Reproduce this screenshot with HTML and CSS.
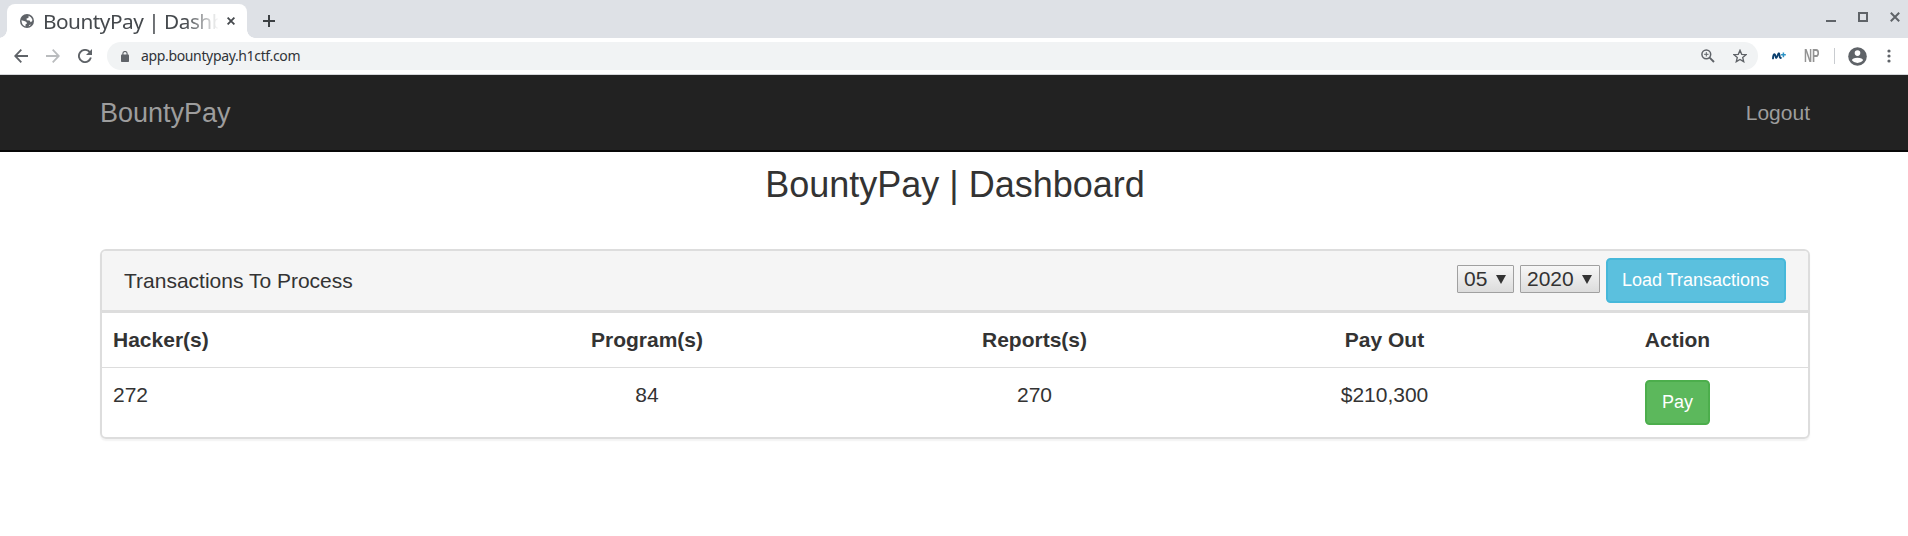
FILE: index.html
```html
<!DOCTYPE html>
<html lang="en">
<head>
<meta charset="utf-8">
<title>BountyPay | Dashboard</title>
<link rel="stylesheet" href="styles.css">
</head>
<body>
<div class="tabstrip">
  <div class="tab">
    <svg class="globe" width="14" height="14" viewBox="0 0 14 14"><circle cx="7" cy="7" r="7" fill="#5f6368"/><path d="M1.5 6.2 L5 7.3 Q6.8 7.8 7 9.4 L5.6 10.3 L5.4 12.4 Q1.4 11 1.5 6.2Z M8.7 1.8 Q11.3 2.9 12.2 5.3 L12.3 7 L10.7 8.2 L9.6 6.5 L6.8 6.2 L6.5 4.6 L8.4 4Z M8.6 12.2 L9.4 11 L11 10.4 Q10 11.8 8.6 12.2Z" fill="#fff"/></svg>
    <div class="tab-title">BountyPay | Dashb</div>
    <svg class="tab-close" width="8" height="8" viewBox="0 0 8 8"><path d="M.6 .6 7.4 7.4M7.4 .6 .6 7.4" stroke="#45494d" stroke-width="1.8"/></svg>
  </div>
  <svg class="newtab" width="12" height="12" viewBox="0 0 12 12"><path d="M6 0V12M0 6H12" stroke="#3c4043" stroke-width="2"/></svg>
  <div class="winbuttons">
    <svg width="10" height="10" viewBox="0 0 10 10"><path d="M0 9H10" stroke="#5f6368" stroke-width="2"/></svg>
    <svg width="10" height="10" viewBox="0 0 10 10"><rect x="1" y="1" width="8" height="8" fill="none" stroke="#5f6368" stroke-width="2"/></svg>
    <svg width="10" height="10" viewBox="0 0 10 10"><path d="M.8 .8 9.2 9.2M9.2 .8 .8 9.2" stroke="#5f6368" stroke-width="2"/></svg>
  </div>
</div>
<div class="toolbar">
  <div class="navicons">
    <svg width="14" height="14" viewBox="0 0 14 14" fill="none" stroke="#5f6368" stroke-width="1.8"><path d="M14 7H1.5M7.3 .7 1.2 7 7.3 13.3"/></svg>
    <svg width="14" height="14" viewBox="0 0 14 14" fill="none" stroke="#babcbe" stroke-width="1.8"><path d="M0 7H12.5M6.7 .7 12.8 7 6.7 13.3"/></svg>
    <svg width="14" height="14" viewBox="0 0 14 14"><path d="M11.8 3.2A6.1 6.1 0 1 0 12.9 8.6" fill="none" stroke="#5f6368" stroke-width="1.9"/><path d="M14 0V6H8Z" fill="#5f6368"/></svg>
  </div>
  <div class="omnibox">
    <svg width="8" height="11" viewBox="0 0 8 11"><rect y="3.6" width="8" height="7.4" rx=".8" fill="#5f6368"/><path d="M1.9 4V2.6a2.1 2.1 0 0 1 4.2 0V4" fill="none" stroke="#5f6368" stroke-width="1.1"/></svg>
    <span class="url">app.bountypay.h1ctf.com</span>
    <svg class="zoomicon" width="14" height="14" viewBox="0 0 14 14" fill="none" stroke="#5f6368"><circle cx="5.3" cy="5.3" r="4.4" stroke-width="1.5"/><path d="M8.6 8.6 13 13" stroke-width="1.9"/><path d="M5.3 3.1V7.5M3.1 5.3H7.5" stroke-width="1"/></svg>
    <svg width="14" height="14" viewBox="0 0 14 14"><path d="M7 1.3 8.7 5.3 13 5.7 9.7 8.5 10.7 12.7 7 10.5 3.3 12.7 4.3 8.5 1 5.7 5.3 5.3Z" fill="none" stroke="#5f6368" stroke-width="1.35"/></svg>
  </div>
  <svg class="movistar" width="14" height="8" viewBox="0 0 14 8" fill="none"><path d="M1 6.4C1.1 4.6 1.8 2.2 2.6 2.2C3.6 2.2 3.3 6 4.2 6C5.2 6 5.8 1.3 6.9 1.3C8 1.3 7 6.4 8.9 5.9" stroke="#0b3f6e" stroke-width="1.9" stroke-linecap="round"/><path d="M11.4 .4V5.2M9.1 2.8H13.8" stroke="#2c93c6" stroke-width="1.5"/></svg>
  <span class="np">NP</span>
  <div class="separator"></div>
  <svg class="avatar" width="19" height="19" viewBox="0 0 19 19"><circle cx="9.5" cy="9.5" r="9.3" fill="#5f6368"/><circle cx="9.5" cy="6.1" r="2.8" fill="#fff"/><path d="M3.9 13.3Q4.3 10.8 9.5 10.8Q14.7 10.8 15.1 13.3Q13 16.1 9.5 16.1Q6 16.1 3.9 13.3Z" fill="#fff"/></svg>
  <svg class="dots" width="4" height="14" viewBox="0 0 4 14" fill="#5f6368"><circle cx="2" cy="2" r="1.6"/><circle cx="2" cy="7" r="1.6"/><circle cx="2" cy="12" r="1.6"/></svg>
</div>
<nav class="navbar">
  <div class="container nav-row">
    <span class="brand">BountyPay</span>
    <span class="logout">Logout</span>
  </div>
</nav>
<main class="container">
  <h1 class="title">BountyPay | Dashboard</h1>
  <section class="panel">
    <header class="panel-head">
      <span class="panel-title">Transactions To Process</span>
      <div class="select month">05<i class="arrow"></i></div>
      <div class="select year">2020<i class="arrow"></i></div>
      <button class="btn btn-info">Load Transactions</button>
    </header>
    <table class="table">
      <colgroup><col class="c1"><col class="c2"><col class="c3"><col class="c4"><col class="c5"></colgroup>
      <tr><th>Hacker(s)</th><th>Program(s)</th><th>Reports(s)</th><th>Pay Out</th><th>Action</th></tr>
      <tr><td>272</td><td>84</td><td>270</td><td>$210,300</td><td><button class="btn btn-success">Pay</button></td></tr>
    </table>
  </section>
</main>
</body>
</html>
```
FILE: styles.css
```css
* { box-sizing: border-box; }
body {
  margin: 0;
  height: 536px;
  overflow: hidden;
  background: #fff;
  color: #333;
  font: 21px/30px "Liberation Sans", Arial, sans-serif;
}
svg { display: block; flex: none; }

.tabstrip {
  display: flex;
  height: 38px;
  padding: 4px 8px 0 7px;
  background: #dee1e6;
}
.tab {
  position: relative;
  display: flex;
  align-items: center;
  width: 240px;
  height: 34px;
  padding: 0 12px 0 13px;
  border-radius: 8px 8px 0 0;
  background: #fff;
}
.tab::before, .tab::after {
  content: "";
  position: absolute;
  bottom: 0;
  width: 8px;
  height: 8px;
}
.tab::before { left: -8px; background: radial-gradient(circle at 0 0, transparent 7.5px, #fff 8px); }
.tab::after { right: -8px; background: radial-gradient(circle at 100% 0, transparent 7.5px, #fff 8px); }
.tab-title {
  width: 175px;
  margin-left: 9px;
  padding-bottom: 1px;
  white-space: nowrap;
  font: 20.8px/30px "Noto Sans", sans-serif;
  letter-spacing: -0.5px;
  color: #45494d;
  -webkit-mask-image: linear-gradient(to right, #000 142px, transparent 176px);
  mask-image: linear-gradient(to right, #000 142px, transparent 176px);
}
.tab-close { margin-left: 9px; }
.newtab { margin: 11px 0 0 16px; }
.winbuttons { display: flex; gap: 22px; margin: 8px 0 0 auto; }

.toolbar {
  display: flex;
  align-items: center;
  height: 37px;
  padding: 0 17px 0 14px;
  border-bottom: 1px solid #d5d7da;
}
.navicons { display: flex; gap: 18px; }
.omnibox {
  display: flex;
  align-items: center;
  width: 1652px;
  height: 28px;
  margin-left: 15px;
  padding: 0 11px 0 14px;
  border-radius: 14px;
  background: #f1f3f4;
}
.url {
  margin-left: 12px;
  font: 14px/20px "Noto Sans", sans-serif;
  letter-spacing: -0.35px;
  color: #303338;
}
.zoomicon { margin: 0 18px 0 auto; }
.movistar { margin-left: 14px; }
.np {
  width: 16px;
  margin-left: 18px;
  font: 700 18px/20px "Liberation Sans", Arial, sans-serif;
  color: #939393;
  transform: scaleX(.62);
  transform-origin: 0 50%;
}
.separator { width: 1px; height: 16px; margin-left: 14px; background: #c9ccd0; }
.avatar { margin-left: 13px; }
.dots { margin-left: 20px; }

.container { width: 1710px; margin: 0 0 0 100px; }
.navbar {
  height: 77px;
  background: #222;
  border-bottom: 2px solid #080808;
}
.nav-row {
  display: flex;
  justify-content: space-between;
  align-items: center;
  height: 75px;
  color: #9d9d9d;
}
.brand { font-size: 27px; }
.title {
  margin: 13px 0 44px;
  font-size: 36px;
  line-height: 40px;
  font-weight: 400;
  text-align: center;
}

.panel {
  height: 190px;
  border: 2px solid #ddd;
  border-radius: 6px;
  box-shadow: 0 1.5px 1.5px rgba(0, 0, 0, .05);
}
.panel-head {
  display: flex;
  align-items: flex-start;
  height: 62px;
  padding: 7px 22px 0;
  border-bottom: 3px solid #ddd;
  border-radius: 4px 4px 0 0;
  background: #f5f5f5;
}
.panel-title { margin: 8px auto 0 0; }
.select {
  display: flex;
  align-items: center;
  justify-content: space-between;
  height: 28px;
  margin: 7px 6px 0 0;
  padding: 0 7px 0 6px;
  border: 1px solid #a0a0a0;
  border-radius: 1px;
  background: linear-gradient(#f7f7f7, #dcdcdc);
}
.month { width: 57px; }
.year { width: 80px; }
.arrow {
  border: 5px solid transparent;
  border-top: 9px solid #333;
  border-bottom: 0;
}
.btn {
  height: 45px;
  padding: 0 13px;
  border: 2px solid;
  border-radius: 4.5px;
  font: 18px/27px "Liberation Sans", Arial, sans-serif;
  color: #fff;
}
.btn-info { width: 180px; padding-right: 14px; background: #5bc0de; border-color: #46b8da; }
.btn-success { width: 65px; display: block; margin: 0 auto; background: #5cb85c; border-color: #4cae4c; }

.table {
  width: 1706px;
  table-layout: fixed;
  border-collapse: separate;
  border-spacing: 0;
}
.c1 { width: 345px; }
.c2 { width: 400px; }
.c3 { width: 375px; }
.c4 { width: 325px; }
.c5 { width: 261px; }
.table th, .table td {
  padding: 12px;
  text-align: center;
  vertical-align: top;
}
.table th { height: 55px; border-bottom: 1px solid #ddd; }
.table th:first-child, .table td:first-child { padding-left: 11px; text-align: left; }
```
